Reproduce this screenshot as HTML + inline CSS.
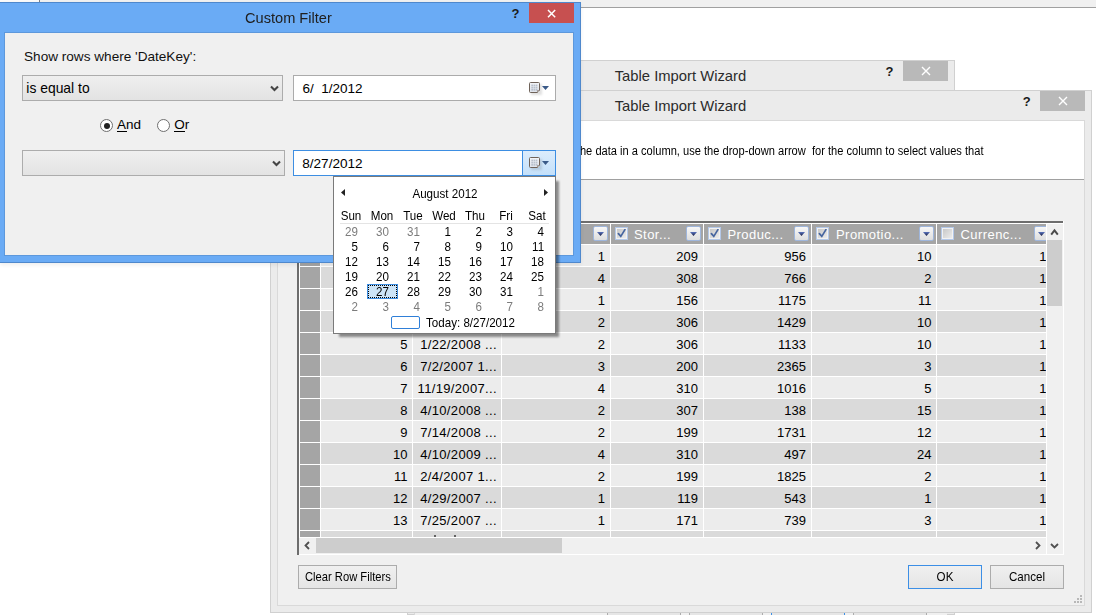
<!DOCTYPE html>
<html><head><meta charset="utf-8">
<style>
*{margin:0;padding:0;box-sizing:border-box}
html,body{width:1096px;height:615px;overflow:hidden;background:#fff;font-family:"Liberation Sans",sans-serif;color:#000}
.a{position:absolute}
.t{position:absolute;white-space:pre;line-height:1}
.clip{position:absolute;overflow:hidden}
</style></head><body>
<div class="a" style="left:0px;top:0px;width:1096px;height:7px;background:#f0f0f0"></div>
<div class="a" style="left:581px;top:7px;width:515px;height:1px;background:#a0a0a0"></div>
<div class="a" style="left:0px;top:0px;width:39px;height:2px;background:#fafafa"></div>
<div class="a" style="left:39px;top:0px;width:1px;height:2px;background:#808080"></div>
<div class="a" style="left:407px;top:60px;width:548px;height:555px;background:#ebebeb;border:1px solid #d0d0d0"></div>
<div class="t" style="left:614.7px;top:69.00px;font-size:14.8px;color:#2b2b2b">Table Import Wizard</div>
<div class="a" style="left:903px;top:61px;width:45px;height:20px;background:#b9b9b9"></div>
<svg class="a" style="left:920.5px;top:66px" width="10" height="10" viewBox="0 0 10 10"><path d="M1 1L9 9M9 1L1 9" stroke="#fff" stroke-width="1.4" fill="none"/></svg>
<div class="t" style="left:885.5px;top:65.00px;font-size:13px;font-weight:bold;color:#1a1a1a">?</div>
<div class="a" style="left:414px;top:613px;width:533px;height:3px;background:#f0f0f0;border-left:1px solid #d9d9d9"></div>
<div class="a" style="left:607px;top:611px;width:74px;height:6px;border:1px solid #acacac;background:#e6e6e6"></div>
<div class="a" style="left:689px;top:611px;width:74px;height:6px;border:1px solid #acacac;background:#e6e6e6"></div>
<div class="a" style="left:771px;top:611px;width:74px;height:6px;border:1px solid #3c8fe6;background:#e6e6e6"></div>
<div class="a" style="left:853px;top:611px;width:74px;height:6px;border:1px solid #acacac;background:#e6e6e6"></div>
<div class="a" style="left:270px;top:90px;width:822px;height:523px;background:#ebebeb;border:1px solid #d0d0d0"></div>
<div class="t" style="left:614.7px;top:99.00px;font-size:14.8px;color:#2b2b2b">Table Import Wizard</div>
<div class="a" style="left:1040px;top:91px;width:45px;height:20px;background:#b9b9b9"></div>
<svg class="a" style="left:1057.5px;top:96px" width="10" height="10" viewBox="0 0 10 10"><path d="M1 1L9 9M9 1L1 9" stroke="#fff" stroke-width="1.4" fill="none"/></svg>
<div class="t" style="left:1022.8px;top:95.00px;font-size:13px;font-weight:bold;color:#1a1a1a">?</div>
<div class="a" style="left:277px;top:120px;width:808px;height:486px;background:#f0f0f0;border:1px solid #d9d9d9"></div>
<div class="a" style="left:278px;top:121px;width:806px;height:58px;background:#fff"></div>
<div class="a" style="left:278px;top:179px;width:806px;height:1px;background:#a0a0a0"></div>
<div class="t" style="left:538.3px;top:145.00px;font-size:12px;color:#000;transform:scaleX(0.9249999999999999);transform-origin:left top">To filter the data in a column, use the drop-down arrow  for the column to select values that</div>
<div class="a" style="left:297px;top:221px;width:767px;height:334px;background:#f0f0f0"></div>
<div class="a" style="left:297px;top:221px;width:766px;height:2px;background:#6d6d6d"></div>
<div class="a" style="left:297px;top:221px;width:2px;height:334px;background:#6d6d6d"></div>
<div class="a" style="left:299px;top:223px;width:765px;height:1px;background:#fff"></div>
<div class="a" style="left:299px;top:223px;width:1px;height:331px;background:#fff"></div>
<div class="a" style="left:1063px;top:221px;width:1px;height:334px;background:#fff"></div>
<div class="a" style="left:299px;top:554px;width:765px;height:1px;background:#fff"></div>
<div class="a" style="left:300px;top:224px;width:747px;height:20px;background:#a5a5a5"></div>
<div class="a" style="left:300px;top:244px;width:747px;height:294px;background:#fff"></div>
<div class="clip" style="left:300px;top:244px;width:747px;height:293px">
<div class="a" style="left:0;top:1px;width:20px;height:21px;background:#a5a5a5"></div>
<div class="a" style="left:21px;top:1px;width:726px;height:21px;background:#ececec"></div>
<div class="t" style="left:-92.5px;width:200px;text-align:right;top:6.00px;font-size:13px">1</div>
<div class="t" style="left:-3px;width:200px;text-align:right;top:6.00px;font-size:13px;letter-spacing:0.35px"></div>
<div class="t" style="left:105px;width:200px;text-align:right;top:6.00px;font-size:13px">1</div>
<div class="t" style="left:198px;width:200px;text-align:right;top:6.00px;font-size:13px">209</div>
<div class="t" style="left:306px;width:200px;text-align:right;top:6.00px;font-size:13px">956</div>
<div class="t" style="left:431.5px;width:200px;text-align:right;top:6.00px;font-size:13px">10</div>
<div class="t" style="left:546.5px;width:200px;text-align:right;top:6.00px;font-size:13px">1</div>
<div class="a" style="left:0;top:22px;width:747px;height:1px;background:#fff"></div>
<div class="a" style="left:0;top:23px;width:20px;height:21px;background:#a5a5a5"></div>
<div class="a" style="left:21px;top:23px;width:726px;height:21px;background:#dadada"></div>
<div class="t" style="left:-92.5px;width:200px;text-align:right;top:28.00px;font-size:13px">2</div>
<div class="t" style="left:-3px;width:200px;text-align:right;top:28.00px;font-size:13px;letter-spacing:0.35px"></div>
<div class="t" style="left:105px;width:200px;text-align:right;top:28.00px;font-size:13px">4</div>
<div class="t" style="left:198px;width:200px;text-align:right;top:28.00px;font-size:13px">308</div>
<div class="t" style="left:306px;width:200px;text-align:right;top:28.00px;font-size:13px">766</div>
<div class="t" style="left:431.5px;width:200px;text-align:right;top:28.00px;font-size:13px">2</div>
<div class="t" style="left:546.5px;width:200px;text-align:right;top:28.00px;font-size:13px">1</div>
<div class="a" style="left:0;top:44px;width:747px;height:1px;background:#fff"></div>
<div class="a" style="left:0;top:45px;width:20px;height:21px;background:#a5a5a5"></div>
<div class="a" style="left:21px;top:45px;width:726px;height:21px;background:#ececec"></div>
<div class="t" style="left:-92.5px;width:200px;text-align:right;top:50.00px;font-size:13px">3</div>
<div class="t" style="left:-3px;width:200px;text-align:right;top:50.00px;font-size:13px;letter-spacing:0.35px"></div>
<div class="t" style="left:105px;width:200px;text-align:right;top:50.00px;font-size:13px">1</div>
<div class="t" style="left:198px;width:200px;text-align:right;top:50.00px;font-size:13px">156</div>
<div class="t" style="left:306px;width:200px;text-align:right;top:50.00px;font-size:13px">1175</div>
<div class="t" style="left:431.5px;width:200px;text-align:right;top:50.00px;font-size:13px">11</div>
<div class="t" style="left:546.5px;width:200px;text-align:right;top:50.00px;font-size:13px">1</div>
<div class="a" style="left:0;top:66px;width:747px;height:1px;background:#fff"></div>
<div class="a" style="left:0;top:67px;width:20px;height:21px;background:#a5a5a5"></div>
<div class="a" style="left:21px;top:67px;width:726px;height:21px;background:#dadada"></div>
<div class="t" style="left:-92.5px;width:200px;text-align:right;top:72.00px;font-size:13px">4</div>
<div class="t" style="left:-3px;width:200px;text-align:right;top:72.00px;font-size:13px;letter-spacing:0.35px"></div>
<div class="t" style="left:105px;width:200px;text-align:right;top:72.00px;font-size:13px">2</div>
<div class="t" style="left:198px;width:200px;text-align:right;top:72.00px;font-size:13px">306</div>
<div class="t" style="left:306px;width:200px;text-align:right;top:72.00px;font-size:13px">1429</div>
<div class="t" style="left:431.5px;width:200px;text-align:right;top:72.00px;font-size:13px">10</div>
<div class="t" style="left:546.5px;width:200px;text-align:right;top:72.00px;font-size:13px">1</div>
<div class="a" style="left:0;top:88px;width:747px;height:1px;background:#fff"></div>
<div class="a" style="left:0;top:89px;width:20px;height:21px;background:#a5a5a5"></div>
<div class="a" style="left:21px;top:89px;width:726px;height:21px;background:#ececec"></div>
<div class="t" style="left:-92.5px;width:200px;text-align:right;top:94.00px;font-size:13px">5</div>
<div class="t" style="left:-3px;width:200px;text-align:right;top:94.00px;font-size:13px;letter-spacing:0.35px">1/22/2008 ...</div>
<div class="t" style="left:105px;width:200px;text-align:right;top:94.00px;font-size:13px">2</div>
<div class="t" style="left:198px;width:200px;text-align:right;top:94.00px;font-size:13px">306</div>
<div class="t" style="left:306px;width:200px;text-align:right;top:94.00px;font-size:13px">1133</div>
<div class="t" style="left:431.5px;width:200px;text-align:right;top:94.00px;font-size:13px">10</div>
<div class="t" style="left:546.5px;width:200px;text-align:right;top:94.00px;font-size:13px">1</div>
<div class="a" style="left:0;top:110px;width:747px;height:1px;background:#fff"></div>
<div class="a" style="left:0;top:111px;width:20px;height:21px;background:#a5a5a5"></div>
<div class="a" style="left:21px;top:111px;width:726px;height:21px;background:#dadada"></div>
<div class="t" style="left:-92.5px;width:200px;text-align:right;top:116.00px;font-size:13px">6</div>
<div class="t" style="left:-3px;width:200px;text-align:right;top:116.00px;font-size:13px;letter-spacing:0.35px">7/2/2007 1...</div>
<div class="t" style="left:105px;width:200px;text-align:right;top:116.00px;font-size:13px">3</div>
<div class="t" style="left:198px;width:200px;text-align:right;top:116.00px;font-size:13px">200</div>
<div class="t" style="left:306px;width:200px;text-align:right;top:116.00px;font-size:13px">2365</div>
<div class="t" style="left:431.5px;width:200px;text-align:right;top:116.00px;font-size:13px">3</div>
<div class="t" style="left:546.5px;width:200px;text-align:right;top:116.00px;font-size:13px">1</div>
<div class="a" style="left:0;top:132px;width:747px;height:1px;background:#fff"></div>
<div class="a" style="left:0;top:133px;width:20px;height:21px;background:#a5a5a5"></div>
<div class="a" style="left:21px;top:133px;width:726px;height:21px;background:#ececec"></div>
<div class="t" style="left:-92.5px;width:200px;text-align:right;top:138.00px;font-size:13px">7</div>
<div class="t" style="left:-3px;width:200px;text-align:right;top:138.00px;font-size:13px;letter-spacing:0.35px">11/19/2007...</div>
<div class="t" style="left:105px;width:200px;text-align:right;top:138.00px;font-size:13px">4</div>
<div class="t" style="left:198px;width:200px;text-align:right;top:138.00px;font-size:13px">310</div>
<div class="t" style="left:306px;width:200px;text-align:right;top:138.00px;font-size:13px">1016</div>
<div class="t" style="left:431.5px;width:200px;text-align:right;top:138.00px;font-size:13px">5</div>
<div class="t" style="left:546.5px;width:200px;text-align:right;top:138.00px;font-size:13px">1</div>
<div class="a" style="left:0;top:154px;width:747px;height:1px;background:#fff"></div>
<div class="a" style="left:0;top:155px;width:20px;height:21px;background:#a5a5a5"></div>
<div class="a" style="left:21px;top:155px;width:726px;height:21px;background:#dadada"></div>
<div class="t" style="left:-92.5px;width:200px;text-align:right;top:160.00px;font-size:13px">8</div>
<div class="t" style="left:-3px;width:200px;text-align:right;top:160.00px;font-size:13px;letter-spacing:0.35px">4/10/2008 ...</div>
<div class="t" style="left:105px;width:200px;text-align:right;top:160.00px;font-size:13px">2</div>
<div class="t" style="left:198px;width:200px;text-align:right;top:160.00px;font-size:13px">307</div>
<div class="t" style="left:306px;width:200px;text-align:right;top:160.00px;font-size:13px">138</div>
<div class="t" style="left:431.5px;width:200px;text-align:right;top:160.00px;font-size:13px">15</div>
<div class="t" style="left:546.5px;width:200px;text-align:right;top:160.00px;font-size:13px">1</div>
<div class="a" style="left:0;top:176px;width:747px;height:1px;background:#fff"></div>
<div class="a" style="left:0;top:177px;width:20px;height:21px;background:#a5a5a5"></div>
<div class="a" style="left:21px;top:177px;width:726px;height:21px;background:#ececec"></div>
<div class="t" style="left:-92.5px;width:200px;text-align:right;top:182.00px;font-size:13px">9</div>
<div class="t" style="left:-3px;width:200px;text-align:right;top:182.00px;font-size:13px;letter-spacing:0.35px">7/14/2008 ...</div>
<div class="t" style="left:105px;width:200px;text-align:right;top:182.00px;font-size:13px">2</div>
<div class="t" style="left:198px;width:200px;text-align:right;top:182.00px;font-size:13px">199</div>
<div class="t" style="left:306px;width:200px;text-align:right;top:182.00px;font-size:13px">1731</div>
<div class="t" style="left:431.5px;width:200px;text-align:right;top:182.00px;font-size:13px">12</div>
<div class="t" style="left:546.5px;width:200px;text-align:right;top:182.00px;font-size:13px">1</div>
<div class="a" style="left:0;top:198px;width:747px;height:1px;background:#fff"></div>
<div class="a" style="left:0;top:199px;width:20px;height:21px;background:#a5a5a5"></div>
<div class="a" style="left:21px;top:199px;width:726px;height:21px;background:#dadada"></div>
<div class="t" style="left:-92.5px;width:200px;text-align:right;top:204.00px;font-size:13px">10</div>
<div class="t" style="left:-3px;width:200px;text-align:right;top:204.00px;font-size:13px;letter-spacing:0.35px">4/10/2009 ...</div>
<div class="t" style="left:105px;width:200px;text-align:right;top:204.00px;font-size:13px">4</div>
<div class="t" style="left:198px;width:200px;text-align:right;top:204.00px;font-size:13px">310</div>
<div class="t" style="left:306px;width:200px;text-align:right;top:204.00px;font-size:13px">497</div>
<div class="t" style="left:431.5px;width:200px;text-align:right;top:204.00px;font-size:13px">24</div>
<div class="t" style="left:546.5px;width:200px;text-align:right;top:204.00px;font-size:13px">1</div>
<div class="a" style="left:0;top:220px;width:747px;height:1px;background:#fff"></div>
<div class="a" style="left:0;top:221px;width:20px;height:21px;background:#a5a5a5"></div>
<div class="a" style="left:21px;top:221px;width:726px;height:21px;background:#ececec"></div>
<div class="t" style="left:-92.5px;width:200px;text-align:right;top:226.00px;font-size:13px">11</div>
<div class="t" style="left:-3px;width:200px;text-align:right;top:226.00px;font-size:13px;letter-spacing:0.35px">2/4/2007 1...</div>
<div class="t" style="left:105px;width:200px;text-align:right;top:226.00px;font-size:13px">2</div>
<div class="t" style="left:198px;width:200px;text-align:right;top:226.00px;font-size:13px">199</div>
<div class="t" style="left:306px;width:200px;text-align:right;top:226.00px;font-size:13px">1825</div>
<div class="t" style="left:431.5px;width:200px;text-align:right;top:226.00px;font-size:13px">2</div>
<div class="t" style="left:546.5px;width:200px;text-align:right;top:226.00px;font-size:13px">1</div>
<div class="a" style="left:0;top:242px;width:747px;height:1px;background:#fff"></div>
<div class="a" style="left:0;top:243px;width:20px;height:21px;background:#a5a5a5"></div>
<div class="a" style="left:21px;top:243px;width:726px;height:21px;background:#dadada"></div>
<div class="t" style="left:-92.5px;width:200px;text-align:right;top:248.00px;font-size:13px">12</div>
<div class="t" style="left:-3px;width:200px;text-align:right;top:248.00px;font-size:13px;letter-spacing:0.35px">4/29/2007 ...</div>
<div class="t" style="left:105px;width:200px;text-align:right;top:248.00px;font-size:13px">1</div>
<div class="t" style="left:198px;width:200px;text-align:right;top:248.00px;font-size:13px">119</div>
<div class="t" style="left:306px;width:200px;text-align:right;top:248.00px;font-size:13px">543</div>
<div class="t" style="left:431.5px;width:200px;text-align:right;top:248.00px;font-size:13px">1</div>
<div class="t" style="left:546.5px;width:200px;text-align:right;top:248.00px;font-size:13px">1</div>
<div class="a" style="left:0;top:264px;width:747px;height:1px;background:#fff"></div>
<div class="a" style="left:0;top:265px;width:20px;height:21px;background:#a5a5a5"></div>
<div class="a" style="left:21px;top:265px;width:726px;height:21px;background:#ececec"></div>
<div class="t" style="left:-92.5px;width:200px;text-align:right;top:270.00px;font-size:13px">13</div>
<div class="t" style="left:-3px;width:200px;text-align:right;top:270.00px;font-size:13px;letter-spacing:0.35px">7/25/2007 ...</div>
<div class="t" style="left:105px;width:200px;text-align:right;top:270.00px;font-size:13px">1</div>
<div class="t" style="left:198px;width:200px;text-align:right;top:270.00px;font-size:13px">171</div>
<div class="t" style="left:306px;width:200px;text-align:right;top:270.00px;font-size:13px">739</div>
<div class="t" style="left:431.5px;width:200px;text-align:right;top:270.00px;font-size:13px">3</div>
<div class="t" style="left:546.5px;width:200px;text-align:right;top:270.00px;font-size:13px">1</div>
<div class="a" style="left:0;top:286px;width:747px;height:1px;background:#fff"></div>
<div class="a" style="left:0;top:287px;width:20px;height:21px;background:#a5a5a5"></div>
<div class="a" style="left:21px;top:287px;width:726px;height:21px;background:#dadada"></div>
<div class="t" style="left:-92.5px;width:200px;text-align:right;top:292.00px;font-size:13px">14</div>
<div class="t" style="left:-3px;width:200px;text-align:right;top:292.00px;font-size:13px;letter-spacing:0.35px">8/13/2007 ...</div>
<div class="t" style="left:105px;width:200px;text-align:right;top:292.00px;font-size:13px">2</div>
<div class="t" style="left:198px;width:200px;text-align:right;top:292.00px;font-size:13px">308</div>
<div class="t" style="left:306px;width:200px;text-align:right;top:292.00px;font-size:13px">1214</div>
<div class="t" style="left:431.5px;width:200px;text-align:right;top:292.00px;font-size:13px">7</div>
<div class="t" style="left:546.5px;width:200px;text-align:right;top:292.00px;font-size:13px">1</div>
<div class="a" style="left:0;top:308px;width:747px;height:1px;background:#fff"></div>
<div class="a" style="left:20px;top:0;width:1px;height:293px;background:#fff"></div>
<div class="a" style="left:112px;top:0;width:1px;height:293px;background:#fff"></div>
<div class="a" style="left:201px;top:0;width:1px;height:293px;background:#fff"></div>
<div class="a" style="left:310px;top:0;width:1px;height:293px;background:#fff"></div>
<div class="a" style="left:403px;top:0;width:1px;height:293px;background:#fff"></div>
<div class="a" style="left:511px;top:0;width:1px;height:293px;background:#fff"></div>
<div class="a" style="left:636px;top:0;width:1px;height:293px;background:#fff"></div>
</div>
<div class="a" style="left:320px;top:224px;width:1px;height:20px;background:#fff"></div>
<div class="a" style="left:412px;top:224px;width:1px;height:20px;background:#fff"></div>
<div class="a" style="left:501px;top:224px;width:1px;height:20px;background:#fff"></div>
<div class="a" style="left:610px;top:224px;width:1px;height:20px;background:#fff"></div>
<div class="a" style="left:703px;top:224px;width:1px;height:20px;background:#fff"></div>
<div class="a" style="left:811px;top:224px;width:1px;height:20px;background:#fff"></div>
<div class="a" style="left:936px;top:224px;width:1px;height:20px;background:#fff"></div>
<div class="a" style="left:1046px;top:224px;width:1px;height:330px;background:#fff"></div>
<div class="a" style="left:300px;top:537px;width:747px;height:1px;background:#fff"></div>
<div class="a" style="left:434px;top:535px;width:2px;height:2px;background:rgba(0,0,0,.55)"></div>
<div class="a" style="left:454px;top:535px;width:2px;height:2px;background:rgba(0,0,0,.55)"></div>
<div class="clip" style="left:300px;top:224px;width:746px;height:20px">
</div>
<div class="a" style="left:593px;top:226px;width:15px;height:15px;border:1px solid #9fb6dc;border-radius:2px;background:linear-gradient(#f7f7f7,#dedede)"></div>
<svg class="a" style="left:597px;top:232px" width="7" height="4" viewBox="0 0 7 4"><defs><linearGradient id="tg" x1="0" y1="0" x2="0" y2="1"><stop offset="0" stop-color="#5a74c0"/><stop offset="1" stop-color="#1a1e40"/></linearGradient></defs><path d="M0 0H7L3.5 4Z" fill="url(#tg)"/></svg>
<div class="a" style="left:615px;top:227px;width:13px;height:13px;border:1px solid #b4c8e8;box-shadow:inset 0 0 0 1px #f2f2f2;background:linear-gradient(135deg,#c4c4c4,#f0f0f0)"></div>
<svg class="a" style="left:617px;top:229px" width="9" height="9" viewBox="0 0 9 9"><path d="M1.4 4.6L3.8 7.4L7.9 0.6" stroke="#46659f" stroke-width="1.7" fill="none" stroke-linecap="round"/></svg>
<div class="t" style="left:634px;top:228.00px;font-size:13px;color:#fff;letter-spacing:0.45px">Stor...</div>
<div class="a" style="left:686px;top:226px;width:15px;height:15px;border:1px solid #9fb6dc;border-radius:2px;background:linear-gradient(#f7f7f7,#dedede)"></div>
<svg class="a" style="left:690px;top:232px" width="7" height="4" viewBox="0 0 7 4"><defs><linearGradient id="tg" x1="0" y1="0" x2="0" y2="1"><stop offset="0" stop-color="#5a74c0"/><stop offset="1" stop-color="#1a1e40"/></linearGradient></defs><path d="M0 0H7L3.5 4Z" fill="url(#tg)"/></svg>
<div class="a" style="left:708px;top:227px;width:13px;height:13px;border:1px solid #b4c8e8;box-shadow:inset 0 0 0 1px #f2f2f2;background:linear-gradient(135deg,#c4c4c4,#f0f0f0)"></div>
<svg class="a" style="left:710px;top:229px" width="9" height="9" viewBox="0 0 9 9"><path d="M1.4 4.6L3.8 7.4L7.9 0.6" stroke="#46659f" stroke-width="1.7" fill="none" stroke-linecap="round"/></svg>
<div class="t" style="left:727.4px;top:228.00px;font-size:13px;color:#fff;letter-spacing:0.45px">Produc...</div>
<div class="a" style="left:794px;top:226px;width:15px;height:15px;border:1px solid #9fb6dc;border-radius:2px;background:linear-gradient(#f7f7f7,#dedede)"></div>
<svg class="a" style="left:798px;top:232px" width="7" height="4" viewBox="0 0 7 4"><defs><linearGradient id="tg" x1="0" y1="0" x2="0" y2="1"><stop offset="0" stop-color="#5a74c0"/><stop offset="1" stop-color="#1a1e40"/></linearGradient></defs><path d="M0 0H7L3.5 4Z" fill="url(#tg)"/></svg>
<div class="a" style="left:816px;top:227px;width:13px;height:13px;border:1px solid #b4c8e8;box-shadow:inset 0 0 0 1px #f2f2f2;background:linear-gradient(135deg,#c4c4c4,#f0f0f0)"></div>
<svg class="a" style="left:818px;top:229px" width="9" height="9" viewBox="0 0 9 9"><path d="M1.4 4.6L3.8 7.4L7.9 0.6" stroke="#46659f" stroke-width="1.7" fill="none" stroke-linecap="round"/></svg>
<div class="t" style="left:836px;top:228.00px;font-size:13px;color:#fff;letter-spacing:0.45px">Promotio...</div>
<div class="a" style="left:919px;top:226px;width:15px;height:15px;border:1px solid #9fb6dc;border-radius:2px;background:linear-gradient(#f7f7f7,#dedede)"></div>
<svg class="a" style="left:923px;top:232px" width="7" height="4" viewBox="0 0 7 4"><defs><linearGradient id="tg" x1="0" y1="0" x2="0" y2="1"><stop offset="0" stop-color="#5a74c0"/><stop offset="1" stop-color="#1a1e40"/></linearGradient></defs><path d="M0 0H7L3.5 4Z" fill="url(#tg)"/></svg>
<div class="a" style="left:941px;top:227px;width:13px;height:13px;border:1px solid #b4c8e8;box-shadow:inset 0 0 0 1px #f2f2f2;background:linear-gradient(135deg,#c4c4c4,#f0f0f0)"></div>
<div class="t" style="left:960.4px;top:228.00px;font-size:13px;color:#fff;letter-spacing:0.45px">Currenc...</div>
<div class="clip" style="left:1000px;top:224px;width:46px;height:20px">
<div class="a" style="left:34px;top:2px;width:15px;height:15px;border:1px solid #9fb6dc;border-radius:2px;background:linear-gradient(#f7f7f7,#dedede)"></div>
<svg class="a" style="left:38px;top:8px" width="7" height="4"><path d="M0 0H7L3.5 4Z" fill="url(#tg)"/></svg>
</div>
<div class="a" style="left:1047px;top:224px;width:16px;height:330px;background:#f0f0f0"></div>
<div class="a" style="left:1047px;top:240px;width:15px;height:66px;background:#cdcdcd"></div>
<svg class="a" style="left:1050px;top:228px" width="9" height="8" viewBox="0 0 9 8"><path d="M1.2 6.6L4.5 2.4L7.8 6.6" stroke="#4a4a4a" stroke-width="2" fill="none"/></svg>
<div class="a" style="left:299px;top:538px;width:747px;height:16px;background:#f0f0f0"></div>
<div class="a" style="left:1046px;top:224px;width:1px;height:330px;background:#fff"></div>
<div class="a" style="left:316px;top:538px;width:246px;height:15px;background:#cdcdcd"></div>
<svg class="a" style="left:303px;top:541px" width="8" height="9" viewBox="0 0 8 9"><path d="M6 1L2.5 4.5L6 8" stroke="#505050" stroke-width="1.8" fill="none"/></svg>
<svg class="a" style="left:1034px;top:541px" width="8" height="9" viewBox="0 0 8 9"><path d="M2 1L5.5 4.5L2 8" stroke="#505050" stroke-width="1.8" fill="none"/></svg>
<svg class="a" style="left:1050px;top:542px" width="9" height="8" viewBox="0 0 9 8"><path d="M1 2L4.5 5.5L8 2" stroke="#505050" stroke-width="1.8" fill="none"/></svg>
<div class="a" style="left:298px;top:565px;width:99px;height:24px;border:1px solid #acacac;background:linear-gradient(#f0f0f0,#e5e5e5)"></div>
<div class="t" style="left:305.2px;top:571.00px;font-size:12.6px;color:#000;transform:scaleX(0.8888888888888888);transform-origin:left top">Clear Row Filters</div>
<div class="a" style="left:908px;top:565px;width:74px;height:24px;border:1px solid #3c8fe6;background:linear-gradient(#f0f0f0,#e5e5e5)"></div>
<div class="t" style="left:845px;width:200px;text-align:center;top:571.00px;font-size:12.4px;color:#000;transform:scaleX(0.9354838709677419);transform-origin:center top">OK</div>
<div class="a" style="left:990px;top:565px;width:74px;height:24px;border:1px solid #acacac;background:linear-gradient(#f0f0f0,#e5e5e5)"></div>
<div class="t" style="left:926.5px;width:200px;text-align:center;top:571.00px;font-size:12.4px;color:#000;transform:scaleX(0.9354838709677419);transform-origin:center top">Cancel</div>
<div class="a" style="left:1080px;top:595px;width:2px;height:2px;background:#b8b8b8"></div>
<div class="a" style="left:1077px;top:598px;width:2px;height:2px;background:#b8b8b8"></div>
<div class="a" style="left:1080px;top:598px;width:2px;height:2px;background:#b8b8b8"></div>
<div class="a" style="left:1074px;top:601px;width:2px;height:2px;background:#b8b8b8"></div>
<div class="a" style="left:1077px;top:601px;width:2px;height:2px;background:#b8b8b8"></div>
<div class="a" style="left:1080px;top:601px;width:2px;height:2px;background:#b8b8b8"></div>
<div class="a" style="left:0px;top:2px;width:581px;height:261px;background:#6aabf5;border:1px solid #4f88cc;border-left:0;box-shadow:0 2px 4px rgba(0,0,0,.07)"></div>
<div class="t" style="left:245.3px;top:10.00px;font-size:15.5px;color:#202020;transform:scaleX(0.9419354838709677);transform-origin:left top">Custom Filter</div>
<div class="a" style="left:529px;top:3px;width:45px;height:20px;background:#c75050"></div>
<svg class="a" style="left:547.4px;top:8.9px" width="9.2" height="9.2" viewBox="0 0 9.2 9.2"><path d="M1 1L8.2 8.2M8.2 1L1 8.2" stroke="#fff" stroke-width="1.5" fill="none"/></svg>
<div class="t" style="left:511.5px;top:7.00px;font-size:13px;font-weight:bold;color:#1a1a1a">?</div>
<div class="a" style="left:4px;top:32px;width:570px;height:224px;background:#f0f0f0;border:1px solid #5d98dc"></div>
<div class="t" style="left:24px;top:50.00px;font-size:13.6px;color:#111">Show rows where 'DateKey':</div>
<div class="a" style="left:22px;top:75px;width:261px;height:26px;border:1px solid #acacac;background:linear-gradient(#efefef,#e3e3e3)"></div>
<div class="t" style="left:26.3px;top:82.00px;font-size:13.9px;color:#000">is equal to</div>
<svg class="a" style="left:270px;top:85px" width="9" height="7" viewBox="0 0 9 7"><path d="M1 1.5L4.5 5L8 1.5" stroke="#454545" stroke-width="2.1" fill="none"/></svg>
<div class="a" style="left:293px;top:75px;width:263px;height:26px;border:1px solid #ababab;background:#fff"></div>
<div class="t" style="left:302.5px;top:82.00px;font-size:13.5px;color:#000">6/  1/2012</div>
<div class="a" style="left:531px;top:84px;width:11px;height:11px;background:rgba(0,0,0,.12);filter:blur(1px)"></div>
<svg class="a" style="left:529px;top:82px" width="12" height="12" viewBox="0 0 12 12"><defs><linearGradient id="cg" x1="0" y1="0" x2="0" y2="1"><stop offset="0" stop-color="#f3f5f9"/><stop offset="1" stop-color="#dde2ea"/></linearGradient></defs><path d="M1.5 0.5H9.5Q10.5 0.5 10.5 1.5V8.5L8.5 10.5H1.5Q0.5 10.5 0.5 9.5V1.5Q0.5 0.5 1.5 0.5Z" fill="url(#cg)" stroke="#6f6259" stroke-width="1"/><rect x="2.3" y="2.6" width="1.7" height="1.7" fill="#b9c1cd"/><rect x="2.3" y="4.8" width="1.7" height="1.7" fill="#b9c1cd"/><rect x="2.3" y="7.0" width="1.7" height="1.7" fill="#b9c1cd"/><rect x="4.5" y="2.6" width="1.7" height="1.7" fill="#b9c1cd"/><rect x="4.5" y="4.8" width="1.7" height="1.7" fill="#b9c1cd"/><rect x="4.5" y="7.0" width="1.7" height="1.7" fill="#b9c1cd"/><rect x="6.7" y="2.6" width="1.7" height="1.7" fill="#b9c1cd"/><rect x="6.7" y="4.8" width="1.7" height="1.7" fill="#b9c1cd"/><rect x="6.7" y="7.0" width="1.7" height="1.7" fill="#b9c1cd"/><path d="M8.5 10.5V8.5H10.5" fill="#fff" stroke="#8a7f78" stroke-width="0.8"/></svg>
<svg class="a" style="left:542px;top:86px" width="7" height="4" viewBox="0 0 7 4"><path d="M0 0H7L3.5 4Z" fill="#3a5a88"/></svg>
<div class="a" style="left:100px;top:119px;width:13px;height:13px;border:1px solid #6f6f6f;border-radius:50%;background:#fff"></div>
<div class="a" style="left:103.5px;top:122.5px;width:6px;height:6px;border-radius:50%;background:#222"></div>
<div class="t" style="left:117px;top:118.00px;font-size:13.5px;color:#000">And</div>
<div class="a" style="left:117px;top:131px;width:10px;height:1px;background:#000"></div>
<div class="a" style="left:157px;top:119px;width:13px;height:13px;border:1px solid #6f6f6f;border-radius:50%;background:#fff"></div>
<div class="t" style="left:174.3px;top:118.00px;font-size:13.5px;color:#000">Or</div>
<div class="a" style="left:174px;top:131px;width:11px;height:1px;background:#000"></div>
<div class="a" style="left:22px;top:150px;width:263px;height:26px;border:1px solid #acacac;background:linear-gradient(#efefef,#e3e3e3)"></div>
<svg class="a" style="left:272px;top:160px" width="9" height="7" viewBox="0 0 9 7"><path d="M1 1.5L4.5 5L8 1.5" stroke="#454545" stroke-width="2.1" fill="none"/></svg>
<div class="a" style="left:293px;top:150px;width:263px;height:26px;border:1px solid #3d8ee2;background:#fff"></div>
<div class="a" style="left:522px;top:150px;width:34px;height:26px;border:1px solid #3d8ee2;background:linear-gradient(#dcecfc,#c4e0fa)"></div>
<div class="t" style="left:302.2px;top:157.00px;font-size:13.6px;color:#000">8/27/2012</div>
<div class="a" style="left:531px;top:159px;width:11px;height:11px;background:rgba(0,0,0,.12);filter:blur(1px)"></div>
<svg class="a" style="left:529px;top:157px" width="12" height="12" viewBox="0 0 12 12"><defs><linearGradient id="cg" x1="0" y1="0" x2="0" y2="1"><stop offset="0" stop-color="#f3f5f9"/><stop offset="1" stop-color="#dde2ea"/></linearGradient></defs><path d="M1.5 0.5H9.5Q10.5 0.5 10.5 1.5V8.5L8.5 10.5H1.5Q0.5 10.5 0.5 9.5V1.5Q0.5 0.5 1.5 0.5Z" fill="url(#cg)" stroke="#6f6259" stroke-width="1"/><rect x="2.3" y="2.6" width="1.7" height="1.7" fill="#b9c1cd"/><rect x="2.3" y="4.8" width="1.7" height="1.7" fill="#b9c1cd"/><rect x="2.3" y="7.0" width="1.7" height="1.7" fill="#b9c1cd"/><rect x="4.5" y="2.6" width="1.7" height="1.7" fill="#b9c1cd"/><rect x="4.5" y="4.8" width="1.7" height="1.7" fill="#b9c1cd"/><rect x="4.5" y="7.0" width="1.7" height="1.7" fill="#b9c1cd"/><rect x="6.7" y="2.6" width="1.7" height="1.7" fill="#b9c1cd"/><rect x="6.7" y="4.8" width="1.7" height="1.7" fill="#b9c1cd"/><rect x="6.7" y="7.0" width="1.7" height="1.7" fill="#b9c1cd"/><path d="M8.5 10.5V8.5H10.5" fill="#fff" stroke="#8a7f78" stroke-width="0.8"/></svg>
<svg class="a" style="left:542px;top:161px" width="7" height="4" viewBox="0 0 7 4"><path d="M0 0H7L3.5 4Z" fill="#3a5a88"/></svg>
<div class="a" style="left:339px;top:181px;width:220px;height:156px;background:rgba(0,0,0,.42);filter:blur(1.2px)"></div>
<div class="a" style="left:333px;top:176px;width:223px;height:158px;background:#fff;border:1px solid #7a7a7a"></div>
<svg class="a" style="left:341px;top:189px" width="5" height="8" viewBox="0 0 5 8"><path d="M4 0V7L0 3.5Z" fill="#222"/></svg>
<svg class="a" style="left:544px;top:189px" width="5" height="8" viewBox="0 0 5 8"><path d="M0 0V7L4 3.5Z" fill="#222"/></svg>
<div class="t" style="left:344.5px;width:200px;text-align:center;top:188.00px;font-size:12.6px;color:#000;transform:scaleX(0.9206349206349206);transform-origin:center top">August 2012</div>
<div class="t" style="left:250.8px;width:200px;text-align:center;top:210.00px;font-size:12.6px;color:#000;transform:scaleX(0.9206349206349206);transform-origin:center top">Sun</div>
<div class="t" style="left:281.8px;width:200px;text-align:center;top:210.00px;font-size:12.6px;color:#000;transform:scaleX(0.9206349206349206);transform-origin:center top">Mon</div>
<div class="t" style="left:312.8px;width:200px;text-align:center;top:210.00px;font-size:12.6px;color:#000;transform:scaleX(0.9206349206349206);transform-origin:center top">Tue</div>
<div class="t" style="left:343.8px;width:200px;text-align:center;top:210.00px;font-size:12.6px;color:#000;transform:scaleX(0.9206349206349206);transform-origin:center top">Wed</div>
<div class="t" style="left:374.8px;width:200px;text-align:center;top:210.00px;font-size:12.6px;color:#000;transform:scaleX(0.9206349206349206);transform-origin:center top">Thu</div>
<div class="t" style="left:405.8px;width:200px;text-align:center;top:210.00px;font-size:12.6px;color:#000;transform:scaleX(0.9206349206349206);transform-origin:center top">Fri</div>
<div class="t" style="left:436.79999999999995px;width:200px;text-align:center;top:210.00px;font-size:12.6px;color:#000;transform:scaleX(0.9206349206349206);transform-origin:center top">Sat</div>
<div class="a" style="left:340px;top:223px;width:209px;height:1px;background:#e4e4e4"></div>
<div class="a" style="left:367px;top:284px;width:31px;height:15px;background:#cce4f7;border:1px solid #3d8ee2"></div>
<div class="a" style="left:368px;top:285px;width:29px;height:13px;border:1px dotted #000"></div>
<div class="t" style="right:737.5px;top:226.00px;font-size:12.6px;color:#7c7c7c;transform:scaleX(0.9206349206349206);transform-origin:right top">29</div>
<div class="t" style="right:706.5px;top:226.00px;font-size:12.6px;color:#7c7c7c;transform:scaleX(0.9206349206349206);transform-origin:right top">30</div>
<div class="t" style="right:675.5px;top:226.00px;font-size:12.6px;color:#7c7c7c;transform:scaleX(0.9206349206349206);transform-origin:right top">31</div>
<div class="t" style="right:644.5px;top:226.00px;font-size:12.6px;color:#000;transform:scaleX(0.9206349206349206);transform-origin:right top">1</div>
<div class="t" style="right:613.5px;top:226.00px;font-size:12.6px;color:#000;transform:scaleX(0.9206349206349206);transform-origin:right top">2</div>
<div class="t" style="right:582.5px;top:226.00px;font-size:12.6px;color:#000;transform:scaleX(0.9206349206349206);transform-origin:right top">3</div>
<div class="t" style="right:551.5px;top:226.00px;font-size:12.6px;color:#000;transform:scaleX(0.9206349206349206);transform-origin:right top">4</div>
<div class="t" style="right:737.5px;top:241.00px;font-size:12.6px;color:#000;transform:scaleX(0.9206349206349206);transform-origin:right top">5</div>
<div class="t" style="right:706.5px;top:241.00px;font-size:12.6px;color:#000;transform:scaleX(0.9206349206349206);transform-origin:right top">6</div>
<div class="t" style="right:675.5px;top:241.00px;font-size:12.6px;color:#000;transform:scaleX(0.9206349206349206);transform-origin:right top">7</div>
<div class="t" style="right:644.5px;top:241.00px;font-size:12.6px;color:#000;transform:scaleX(0.9206349206349206);transform-origin:right top">8</div>
<div class="t" style="right:613.5px;top:241.00px;font-size:12.6px;color:#000;transform:scaleX(0.9206349206349206);transform-origin:right top">9</div>
<div class="t" style="right:582.5px;top:241.00px;font-size:12.6px;color:#000;transform:scaleX(0.9206349206349206);transform-origin:right top">10</div>
<div class="t" style="right:551.5px;top:241.00px;font-size:12.6px;color:#000;transform:scaleX(0.9206349206349206);transform-origin:right top">11</div>
<div class="t" style="right:737.5px;top:256.00px;font-size:12.6px;color:#000;transform:scaleX(0.9206349206349206);transform-origin:right top">12</div>
<div class="t" style="right:706.5px;top:256.00px;font-size:12.6px;color:#000;transform:scaleX(0.9206349206349206);transform-origin:right top">13</div>
<div class="t" style="right:675.5px;top:256.00px;font-size:12.6px;color:#000;transform:scaleX(0.9206349206349206);transform-origin:right top">14</div>
<div class="t" style="right:644.5px;top:256.00px;font-size:12.6px;color:#000;transform:scaleX(0.9206349206349206);transform-origin:right top">15</div>
<div class="t" style="right:613.5px;top:256.00px;font-size:12.6px;color:#000;transform:scaleX(0.9206349206349206);transform-origin:right top">16</div>
<div class="t" style="right:582.5px;top:256.00px;font-size:12.6px;color:#000;transform:scaleX(0.9206349206349206);transform-origin:right top">17</div>
<div class="t" style="right:551.5px;top:256.00px;font-size:12.6px;color:#000;transform:scaleX(0.9206349206349206);transform-origin:right top">18</div>
<div class="t" style="right:737.5px;top:271.00px;font-size:12.6px;color:#000;transform:scaleX(0.9206349206349206);transform-origin:right top">19</div>
<div class="t" style="right:706.5px;top:271.00px;font-size:12.6px;color:#000;transform:scaleX(0.9206349206349206);transform-origin:right top">20</div>
<div class="t" style="right:675.5px;top:271.00px;font-size:12.6px;color:#000;transform:scaleX(0.9206349206349206);transform-origin:right top">21</div>
<div class="t" style="right:644.5px;top:271.00px;font-size:12.6px;color:#000;transform:scaleX(0.9206349206349206);transform-origin:right top">22</div>
<div class="t" style="right:613.5px;top:271.00px;font-size:12.6px;color:#000;transform:scaleX(0.9206349206349206);transform-origin:right top">23</div>
<div class="t" style="right:582.5px;top:271.00px;font-size:12.6px;color:#000;transform:scaleX(0.9206349206349206);transform-origin:right top">24</div>
<div class="t" style="right:551.5px;top:271.00px;font-size:12.6px;color:#000;transform:scaleX(0.9206349206349206);transform-origin:right top">25</div>
<div class="t" style="right:737.5px;top:286.00px;font-size:12.6px;color:#000;transform:scaleX(0.9206349206349206);transform-origin:right top">26</div>
<div class="t" style="right:706.5px;top:286.00px;font-size:12.6px;color:#000;transform:scaleX(0.9206349206349206);transform-origin:right top">27</div>
<div class="t" style="right:675.5px;top:286.00px;font-size:12.6px;color:#000;transform:scaleX(0.9206349206349206);transform-origin:right top">28</div>
<div class="t" style="right:644.5px;top:286.00px;font-size:12.6px;color:#000;transform:scaleX(0.9206349206349206);transform-origin:right top">29</div>
<div class="t" style="right:613.5px;top:286.00px;font-size:12.6px;color:#000;transform:scaleX(0.9206349206349206);transform-origin:right top">30</div>
<div class="t" style="right:582.5px;top:286.00px;font-size:12.6px;color:#000;transform:scaleX(0.9206349206349206);transform-origin:right top">31</div>
<div class="t" style="right:551.5px;top:286.00px;font-size:12.6px;color:#7c7c7c;transform:scaleX(0.9206349206349206);transform-origin:right top">1</div>
<div class="t" style="right:737.5px;top:301.00px;font-size:12.6px;color:#7c7c7c;transform:scaleX(0.9206349206349206);transform-origin:right top">2</div>
<div class="t" style="right:706.5px;top:301.00px;font-size:12.6px;color:#7c7c7c;transform:scaleX(0.9206349206349206);transform-origin:right top">3</div>
<div class="t" style="right:675.5px;top:301.00px;font-size:12.6px;color:#7c7c7c;transform:scaleX(0.9206349206349206);transform-origin:right top">4</div>
<div class="t" style="right:644.5px;top:301.00px;font-size:12.6px;color:#7c7c7c;transform:scaleX(0.9206349206349206);transform-origin:right top">5</div>
<div class="t" style="right:613.5px;top:301.00px;font-size:12.6px;color:#7c7c7c;transform:scaleX(0.9206349206349206);transform-origin:right top">6</div>
<div class="t" style="right:582.5px;top:301.00px;font-size:12.6px;color:#7c7c7c;transform:scaleX(0.9206349206349206);transform-origin:right top">7</div>
<div class="t" style="right:551.5px;top:301.00px;font-size:12.6px;color:#7c7c7c;transform:scaleX(0.9206349206349206);transform-origin:right top">8</div>
<div class="a" style="left:391px;top:316px;width:29px;height:13px;border:1px solid #2f7fd8;border-radius:2px"></div>
<div class="t" style="left:426px;top:317.00px;font-size:12.6px;color:#000;transform:scaleX(0.9206349206349206);transform-origin:left top">Today: 8/27/2012</div>
</body></html>
